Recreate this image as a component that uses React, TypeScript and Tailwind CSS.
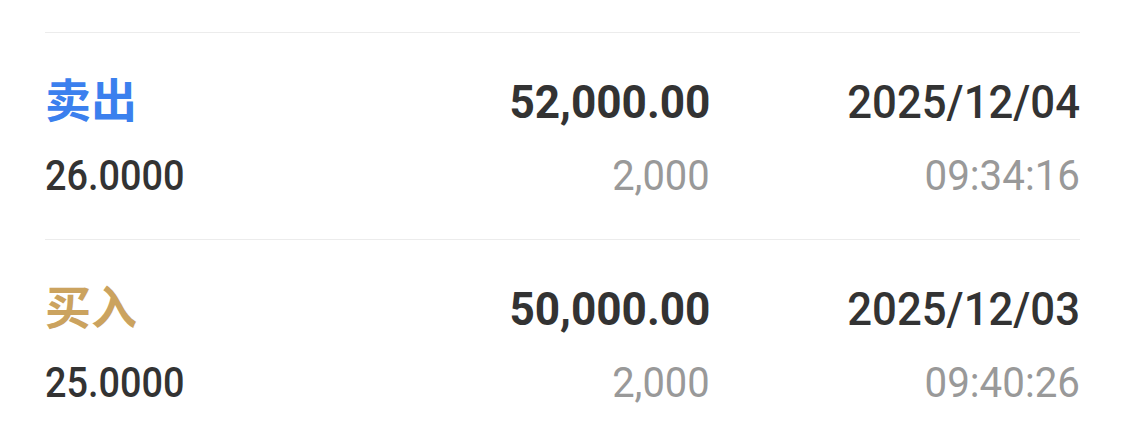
import React from "react";

type Trade = {
  side: "卖出" | "买入";
  price: string;
  amount: string;
  qty: string;
  date: string;
  time: string;
};

const trades: Trade[] = [
  { side: "卖出", price: "26.0000", amount: "52,000.00", qty: "2,000", date: "2025/12/04", time: "09:34:16" },
  { side: "买入", price: "25.0000", amount: "50,000.00", qty: "2,000", date: "2025/12/03", time: "09:40:26" },
];

// figures in Roboto, squeezed a touch where the reference is narrower
function Num({ children, className, left }: { children: React.ReactNode; className: string; left?: boolean }) {
  return (
    <div className={`flex ${left ? "justify-start" : "justify-end"}`}>
      <span
        className={`font-['Roboto',sans-serif] leading-[56px] whitespace-nowrap ${
          left ? "origin-left" : "origin-right"
        } ${className}`}
      >
        {children}
      </span>
    </div>
  );
}

function TradeRow({ t }: { t: Trade }) {
  return (
    <div className="border-t border-[#ececec] pt-[41px] pb-[35px]">
      <div className="grid grid-cols-[1fr_300px_370px] gap-y-[18px]">
        <div
          className={`font-['Noto_Sans_CJK_SC',sans-serif] text-[46px] leading-[46px] font-bold ${
            t.side === "卖出" ? "text-[#3b80ee]" : "text-[#cba35f]"
          }`}
        >
          {t.side}
        </div>
        <Num className="text-[46px] font-bold text-[#333333] scale-x-[0.96]">{t.amount}</Num>
        <Num className="text-[46px] font-medium text-[#333333] scale-x-[0.95]">{t.date}</Num>
        <Num left className="text-[42px] font-medium text-[#333333] scale-x-[0.9]">{t.price}</Num>
        <Num className="text-[42px] text-[#999999] scale-x-[0.95]">{t.qty}</Num>
        <Num className="text-[42px] text-[#999999] scale-x-[0.96]">{t.time}</Num>
      </div>
    </div>
  );
}

export default function App() {
  return (
    <div className="w-[1125px] h-[428px] overflow-hidden bg-white px-[45px] pt-[32px]">
      {trades.map((t) => (
        <TradeRow key={t.date} t={t} />
      ))}
    </div>
  );
}
